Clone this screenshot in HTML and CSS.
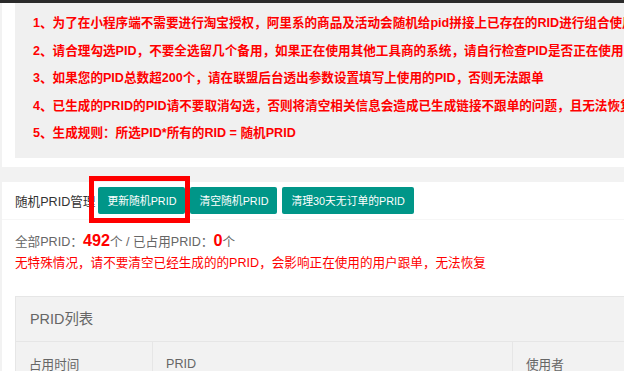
FILE: index.html
```html
<!DOCTYPE html>
<html lang="zh-CN">
<head>
  <meta charset="UTF-8">
  <title>随机PRID管理</title>
  <link rel="stylesheet" href="styles.css">
</head>
<body>
  <div class="topbar"></div>
  <div class="page">
    <!-- 说明 -->
    <div class="card card-notice">
      <div class="notice">
        <p>1、为了在小程序端不需要进行淘宝授权，阿里系的商品及活动会随机给pid拼接上已存在的RID进行组合使用，</p>
        <p>2、请合理勾选PID，不要全选留几个备用，如果正在使用其他工具商的系统，请自行检查PID是否正在使用，避免冲突</p>
        <p>3、如果您的PID总数超200个，请在联盟后台透出参数设置填写上使用的PID，否则无法跟单</p>
        <p>4、已生成的PRID的PID请不要取消勾选，否则将清空相关信息会造成已生成链接不跟单的问题，且无法恢复</p>
        <p>5、生成规则：所选PID*所有的RID = 随机PRID</p>
      </div>
    </div>

    <!-- PRID管理 -->
    <div class="card">
      <div class="card-header">
        <span class="card-title">随机PRID管理</span>
        <button class="btn">更新随机PRID</button>
        <button class="btn">清空随机PRID</button>
        <button class="btn">清理30天无订单的PRID</button>
        <span class="mark"></span>
      </div>
      <div class="card-body">
        <div class="stat">全部PRID：<b>492</b>个 / 已占用PRID：<b>0</b>个</div>
        <div class="warn">无特殊情况，请不要清空已经生成的的PRID，会影响正在使用的用户跟单，无法恢复</div>

        <div class="panel">
          <div class="panel-title">PRID列表</div>
          <table class="table">
            <thead>
              <tr>
                <th class="col-time">占用时间</th>
                <th class="col-prid">PRID</th>
                <th>使用者</th>
              </tr>
            </thead>
          </table>
        </div>
      </div>
    </div>
  </div>
</body>
</html>
```

FILE: styles.css
```css
html, body {
  overflow: hidden;
}

body {
  margin: 0;
  background: #f2f2f2;
  font-family: 'Liberation Sans', 'Noto Sans CJK SC', sans-serif;
  font-size: 12.6px;
  color: #666;
}

.topbar {
  height: 3px;
  background: #2b2b2b;
}

.page {
  width: 1100px;
  padding-left: 2px;
}

.card {
  background: #fff;
  margin-bottom: 15px;
  position: relative;
}

.card-notice {
  padding: 0 13px 9px;
}

.notice {
  background: #f0f0f0;
  padding: 7px 18px 10px;
}

.notice p {
  margin: 0;
  line-height: 27.5px;
  color: #f00;
  font-weight: bold;
  white-space: nowrap;
}

.card-header {
  position: relative;
  display: flex;
  align-items: center;
  height: 37px;
  padding-left: 13px;
  border-bottom: 1px solid #f6f6f6;
}

.card-title {
  color: #333;
  margin-right: 3px;
}

.btn {
  height: 27px;
  padding: 0 9px;
  margin-right: 5px;
  border: none;
  border-radius: 2px;
  background: #009688;
  color: #fff;
  font-family: inherit;
  font-size: 10.8px;
  white-space: nowrap;
}

/* 标注框 */
.mark {
  position: absolute;
  left: 87px;
  top: -6px;
  width: 101px;
  height: 47px;
  box-sizing: border-box;
  border: 5px solid #f00;
}

.card-body {
  padding: 10px 13px 20px;
}

.stat {
  line-height: 21px;
}

.stat b {
  color: #f00;
  font-size: 16.2px;
}

.warn {
  line-height: 21px;
  color: #f00;
}

.panel {
  margin-top: 22px;
  border: 1px solid #e6e6e6;
  background: #f2f2f2;
}

.panel-title {
  height: 44px;
  line-height: 44px;
  padding-left: 14px;
  font-size: 14.4px;
  border-bottom: 1px solid #e6e6e6;
}

.table {
  width: 100%;
  border-collapse: collapse;
}

.table th {
  height: 44px;
  padding: 0 13px;
  text-align: left;
  font-weight: normal;
  border-right: 1px solid #e6e6e6;
}

.col-time {
  width: 110px;
}

.col-prid {
  width: 333px;
}
```
